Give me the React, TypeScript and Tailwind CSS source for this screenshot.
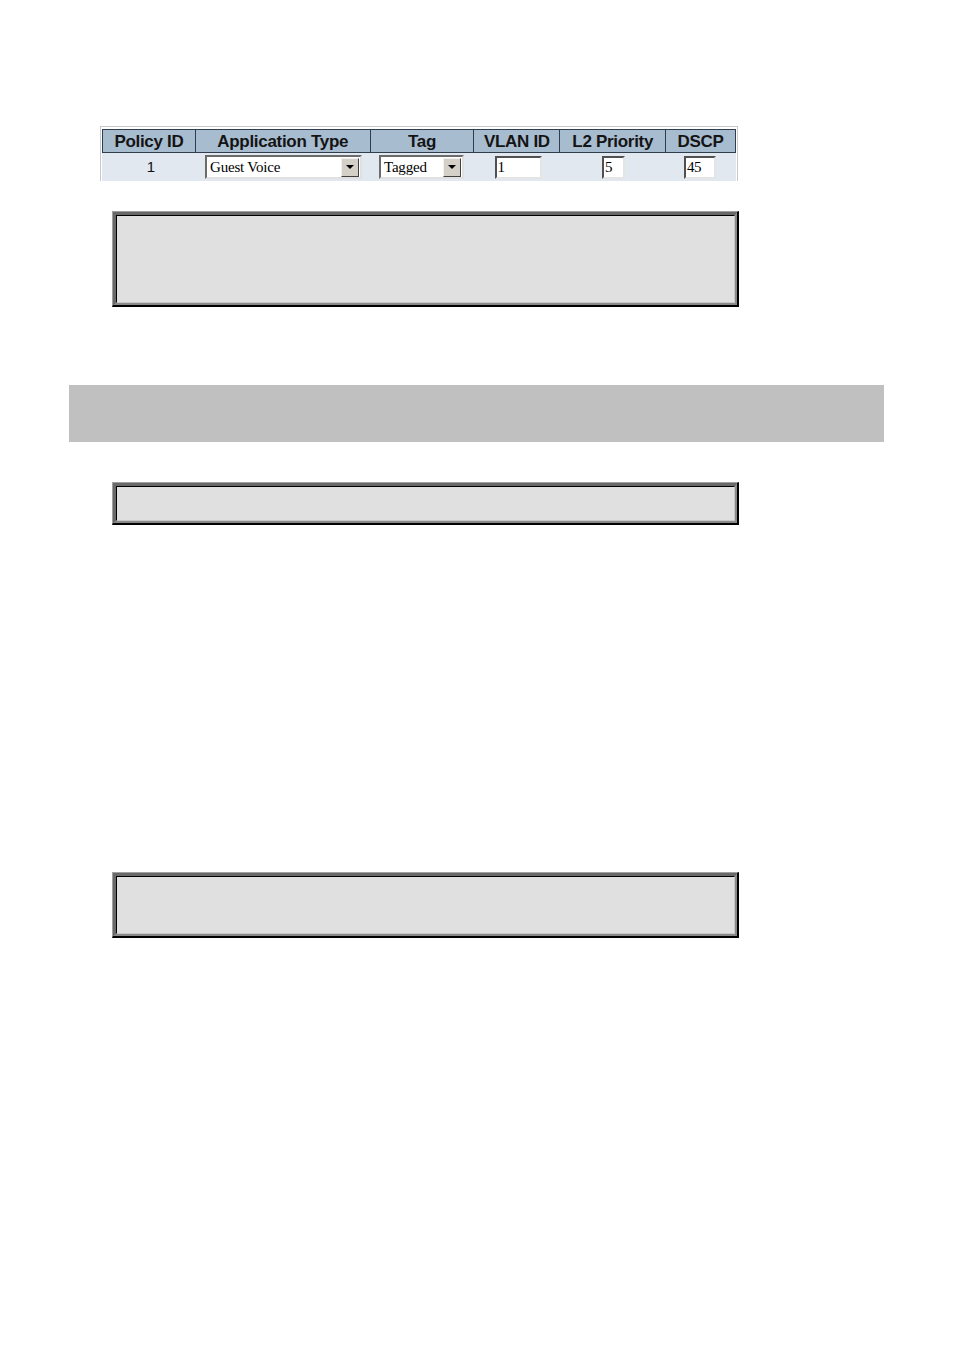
import React from "react";

const cols = [
  { label: "Policy ID", w: "w-[93px]" },
  { label: "Application Type", w: "w-[175px]" },
  { label: "Tag", w: "w-[104px]" },
  { label: "VLAN ID", w: "w-[86px]" },
  { label: "L2 Priority", w: "w-[106px]" },
  { label: "DSCP", w: "w-[70px]" },
];

function Arrow() {
  return (
    <div className="flex h-[19px] w-[18px] items-center justify-center border border-t-[#f0f0f0] border-l-[#f0f0f0] border-r-[#404040] border-b-[#404040] bg-[#d4d0c8]">
      <svg width="8" height="4" viewBox="0 0 8 4">
        <path d="M0 0h8L4 4z" fill="#000" />
      </svg>
    </div>
  );
}

function Select({ value, w }: { value: string; w: string }) {
  return (
    <div
      className={`flex h-[24px] ${w} items-center justify-between border-2 border-t-[#6b6b6b] border-l-[#6b6b6b] border-r-[#e0e0e0] border-b-[#e0e0e0] bg-white pl-[3px] pr-[1px]`}
    >
      <span className="font-['Liberation_Serif',serif] text-[15px] leading-none tracking-[-0.2px] text-black">
        {value}
      </span>
      <Arrow />
    </div>
  );
}

function Input({ value, w }: { value: string; w: string }) {
  return (
    <div
      className={`flex h-[23px] ${w} items-center border-2 border-t-[#505050] border-l-[#505050] border-r-[#e4e4e4] border-b-[#e4e4e4] bg-white pl-[1px]`}
    >
      <span className="font-['Liberation_Serif',serif] text-[15px] leading-none tracking-[-0.5px] text-black">
        {value}
      </span>
    </div>
  );
}

function Bevel({ h }: { h: string }) {
  return (
    <div className="ml-[112px] w-[627px] border-t border-l border-r-2 border-b-2 border-t-[#a0a0a0] border-l-[#a0a0a0] border-r-black border-b-black">
      <div className="border-t-[3px] border-l-[3px] border-r-2 border-b-2 border-t-[#696969] border-l-[#696969] border-r-[#8a8a8a] border-b-[#8a8a8a]">
        <div
          className={`${h} border-t border-l border-r border-b border-t-black border-l-black border-r-[#c8c8c8] border-b-[#c8c8c8] bg-[#e0e0e0]`}
        />
      </div>
    </div>
  );
}

export default function App() {
  return (
    <div className="min-h-[1350px] bg-white pt-[126px] font-['Liberation_Sans',Arial,sans-serif]">
      {/* Policy table */}
      <div className="ml-[100px] w-[638px] border-t border-l border-r border-[#c8c8c8] px-[1px] pt-[2px]">
        <div className="flex border-t border-l border-b border-[#2f3d4c] bg-[#a8bccf]">
          {cols.map((c) => (
            <div
              key={c.label}
              className={`${c.w} flex h-[22px] items-center justify-center border-r border-[#2f3d4c] text-[17px] font-bold leading-none tracking-[-0.3px] text-[#141414]`}
            >
              {c.label}
            </div>
          ))}
        </div>
        <div className="flex h-[28px] items-center bg-[#e1e8ef]">
          <div className="flex w-[93px] justify-center pl-[5px] text-[15px] text-[#111]">1</div>
          <div className="flex w-[175px] pl-[10px]">
            <Select value="Guest Voice" w="w-[157px]" />
          </div>
          <div className="flex w-[104px] pl-[9px]">
            <Select value="Tagged" w="w-[85px]" />
          </div>
          <div className="flex w-[86px] justify-center pl-[2px]">
            <Input value="1" w="w-[47px]" />
          </div>
          <div className="flex w-[106px] justify-center pl-[1px]">
            <Input value="5" w="w-[23px]" />
          </div>
          <div className="flex w-[70px] pl-[18px]">
            <Input value="45" w="w-[32px]" />
          </div>
        </div>
      </div>

      <div className="mt-[30px]">
        <Bevel h="h-[88px]" />
      </div>

      {/* section band */}
      <div className="ml-[69px] mt-[78px] h-[57px] w-[815px] bg-[#c0c0c0]" />

      <div className="mt-[40px]">
        <Bevel h="h-[35px]" />
      </div>

      <div className="mt-[347px]">
        <Bevel h="h-[58px]" />
      </div>
    </div>
  );
}
